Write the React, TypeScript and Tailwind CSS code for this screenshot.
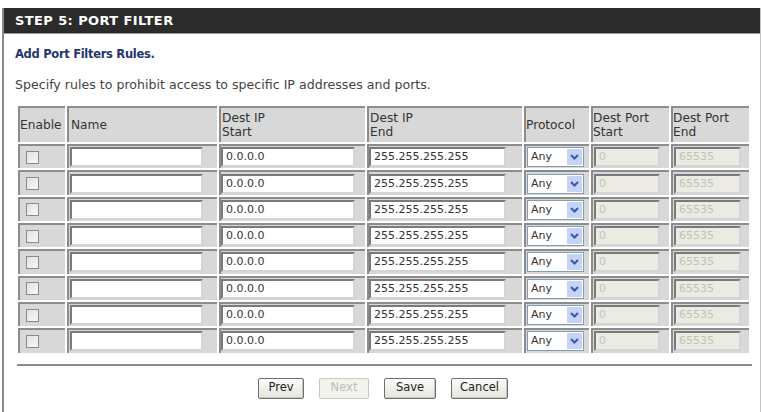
const rows = Array.from({ length: 8 });

const font = { fontFamily: '"DejaVu Sans", Verdana, sans-serif' };

function TextBox({ value, w, disabled }: { value: string; w: string; disabled?: boolean }) {
  return (
    <div
      className={`${w} h-[20px] flex items-center pl-[3px] text-[11px] border-2 border-t-[#7a7a7a] border-l-[#7a7a7a] border-b-[#d4d4d4] border-r-[#d4d4d4] ${
        disabled ? "bg-[#ebebe3] text-[#c2c2b4]" : "bg-white text-[#333]"
      }`}
    >
      {value}
    </div>
  );
}

function Btn({ label, w, disabled }: { label: string; w: string; disabled?: boolean }) {
  return (
    <button
      className={`${w} h-[21px] rounded-[2px] text-[11.5px] flex items-center justify-center ${
        disabled
          ? "border border-[#c9c9c0] bg-[#f3f3ee] text-[#bdbdb5]"
          : "border border-[#6e6e6e] bg-gradient-to-b from-[#fdfdfb] to-[#e4e4dc] text-[#222] shadow-[inset_-1px_-1px_0_#c8c8c0]"
      }`}
    >
      {label}
    </button>
  );
}

const cell = "bg-[#d8d8d8] border-t-2 border-l-2 border-t-[#8c8c8c] border-l-[#8c8c8c] p-0";

export default function App() {
  return (
    <div className="w-[762px] h-[412px] bg-white overflow-hidden pt-[8px]" style={font}>
      <div className="ml-[2px] w-[759px] h-[420px] border-l-2 border-r border-[#8a8a8a] border-r-[#c8c8c8]">
        <div className="h-[26px] bg-[#2b2b2b] border-b border-[#9a9a9a] flex items-center pl-[11px] text-white font-bold text-[13px] tracking-[0.4px]">
          STEP 5: PORT FILTER
        </div>
        <div className="pl-[11px] pt-[12px] text-[11.5px] font-bold text-[#25356e] tracking-[-0.3px]">Add Port Filters Rules.</div>
        <div className="pl-[11px] pt-[13px] text-[12.6px] text-[#444]">
          Specify rules to prohibit access to specific IP addresses and ports.
        </div>
        <table className="ml-[12px] mt-[9px] border-separate border-spacing-[2px] text-[12.2px] text-[#333] leading-[14px]">
          <thead>
            <tr className="h-[36px] text-left align-middle">
              <th className={`${cell} w-[47px] font-normal pl-0`}>Enable</th>
              <th className={`${cell} w-[150px] font-normal pl-[2px]`}>Name</th>
              <th className={`${cell} w-[146px] font-normal pl-[1px]`}>Dest IP<br />Start</th>
              <th className={`${cell} w-[155px] font-normal pl-[1px]`}>Dest IP<br />End</th>
              <th className={`${cell} w-[65px] font-normal pl-0`}>Protocol</th>
              <th className={`${cell} w-[78px] font-normal pl-0`}>Dest Port<br />Start</th>
              <th className={`${cell} w-[78px] font-normal pl-0`}>Dest Port<br />End</th>
            </tr>
          </thead>
          <tbody>
            {rows.map((_, i) => (
              <tr key={i} className="h-[24.3px]">
                <td className={cell}>
                  <div className="ml-[6px] w-[13px] h-[13px] border border-[#8a8a8a] bg-gradient-to-br from-[#e2e2e2] to-[#f8f8f8]" />
                </td>
                <td className={cell}>
                  <div className="pl-[1px]"><TextBox value="" w="w-[133px]" /></div>
                </td>
                <td className={cell}>
                  <TextBox value="0.0.0.0" w="w-[134px]" />
                </td>
                <td className={cell}>
                  <TextBox value="255.255.255.255" w="w-[137px]" />
                </td>
                <td className={cell}>
                  <div className="ml-[1px] w-[57px] h-[20px] bg-white border border-[#7f9db9] flex items-center justify-between text-[11px]">
                    <span className="pl-[3px]">Any</span>
                    <span className="w-[15px] h-[16px] mr-[1px] bg-[#c4d3f6] flex items-center justify-center">
                      <svg width="9" height="6" viewBox="0 0 9 6">
                        <path d="M1 1 L4.5 4.5 L8 1" fill="none" stroke="#3a58a8" strokeWidth="2" />
                      </svg>
                    </span>
                  </div>
                </td>
                <td className={cell}>
                  <div className="pl-[1px]"><TextBox value="0" w="w-[66px]" disabled /></div>
                </td>
                <td className={cell}>
                  <div className="pl-[1px]"><TextBox value="65535" w="w-[67px]" disabled /></div>
                </td>
              </tr>
            ))}
          </tbody>
        </table>
        <div className="ml-[13px] mt-[9px] w-[735px] h-[2px] bg-[#8c8c8c]" />
        <div className="mt-[12px] flex items-center pl-[254px] gap-[15px]">
          <Btn label="Prev" w="w-[46px]" />
          <Btn label="Next" w="w-[50px]" disabled />
          <Btn label="Save" w="w-[52px]" />
          <Btn label="Cancel" w="w-[57px]" />
        </div>
      </div>
    </div>
  );
}
